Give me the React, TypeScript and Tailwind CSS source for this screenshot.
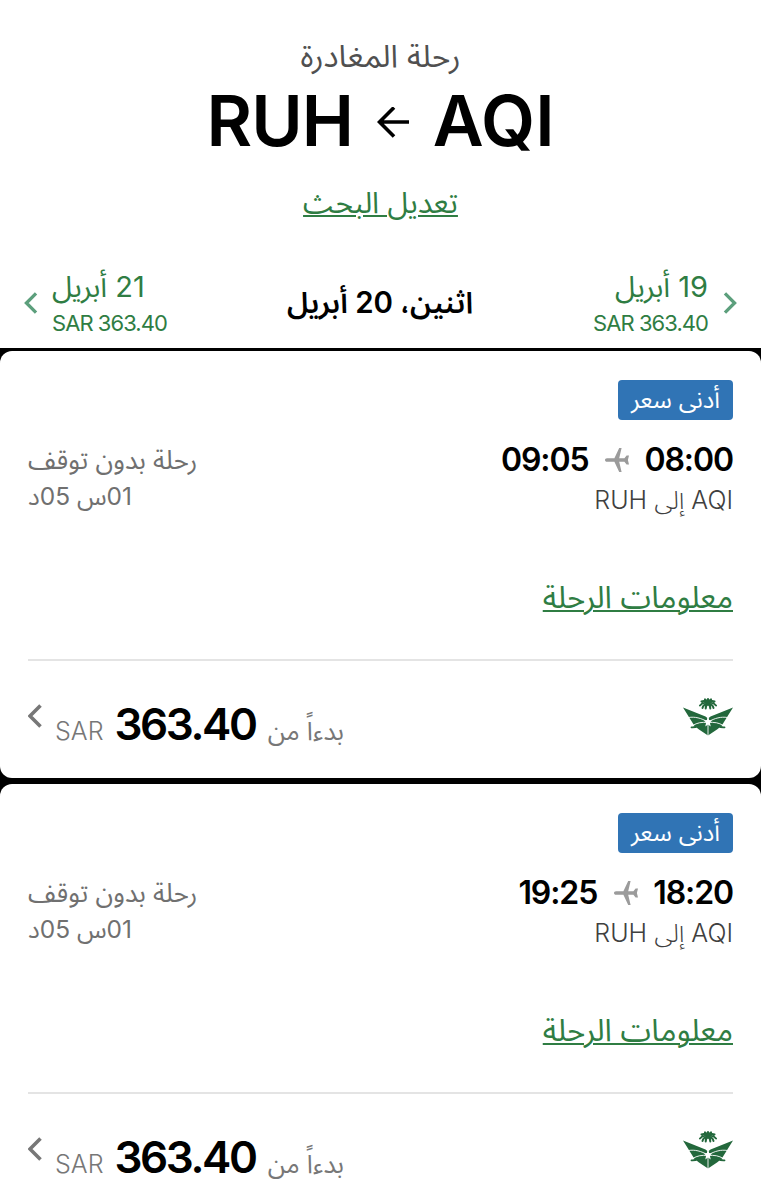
const flights = [
  { departs: "08:00", arrives: "09:05" },
  { departs: "18:20", arrives: "19:25" },
]

function Arrow() {
  return (
    <svg className="mt-1" width="32" height="32" viewBox="0 0 32 32" fill="none" stroke="#000" strokeWidth="3.6">
      <path d="M32 15H3M17 0.500 2.500 15 17 29.500" />
    </svg>
  )
}

function Plane() {
  return (
    <svg width="24" height="24" viewBox="0 0 24 24" fill="#9b9b9b">
      <path d="M0 12c0-1 .8-1.800 2-1.800h7.400L14.200 0h2.400l-2.400 10.200h5.200L21.600 7.400H24L22.900 12l1.100 4.600h-2.400l-2.200-2.800h-5.200L16.600 24h-2.400L9.400 13.800H2c-1.200 0-2-.800-2-1.800z" />
    </svg>
  )
}

function Chevron({ className, flip = false }: { className: string; flip?: boolean }) {
  return (
    <svg className={className} viewBox="0 0 14 24" fill="none" stroke="currentColor" strokeWidth="3.6">
      <path d={flip ? "M1.500 1.500 12 12 1.500 22.500" : "M12.500 1.500 2 12l10.500 10.500"} />
    </svg>
  )
}

function AirlineLogo() {
  return (
    <svg className="mt-[37px]" width="50" height="38" viewBox="0 0 50 38">
      <path fill="#23683c" d="M0 9.500 22.500 18.500 25 20.500 27.500 18.500 50 9.500 38.500 28 34 31.500 25 37.500 16 31.500 11.500 28z" />
      {/* feather gaps and the centre star */}
      <path
        fill="none"
        stroke="#fff"
        strokeWidth="0.9"
        d="M5.500 19.500C12 18.500 18 20 25 24 32 20 38 18.500 44.500 19.500M9.500 27.600c5-3 9-3.600 15.500-3.100 6.500-.5 10.500.1 15.500 3.100M25 20v18"
      />
      <path fill="#fff" d="m25 18 1.100 4 3.100.4-2.300 2.200.8 4-2.700-2.200-2.700 2.200.8-4-2.300-2.200 3.100-.4z" />
      <path fill="none" stroke="#23683c" strokeWidth="1.800" strokeLinecap="round" d="M8.500 29.400c3 .3 5.500-.6 8-2.600M41.500 29.400c-3 .3-5.500-.6-8-2.600" />
      <g fill="none" stroke="#23683c" strokeWidth="2" strokeLinecap="round">
        <path d="M25 5.500C22 4 19 5 17 7.500M25 5.500C28 4 31 5 33 7.500M25 5c-2-2-4-2.500-6.500-1.500M25 5c2-2 4-2.500 6.500-1.500M25 5c-.5-2-1.500-3-3-3.700M25 5c.500-2 1.500-3 3-3.700M25 5V1" />
        <path d="M25 6c-3 0-5 1.500-5.500 4M25 6c3 0 5 1.500 5.500 4M25 6c-1.500 1-2.300 2.500-2.300 4.500M25 6c1.500 1 2.300 2.500 2.300 4.500" />
      </g>
    </svg>
  )
}

function DayLink({ day, className }: { day: string; className: string }) {
  return (
    <div className={`pt-[17px] text-[#2f7d43] ${className}`}>
      <p className="h-10 text-[29px] leading-10 tracking-[-0.2px]">{day}</p>
      <p dir="ltr" className="text-[22px] leading-[32px] tracking-[-0.95px]">SAR 363.40</p>
    </div>
  )
}

function FlightCard({ departs, arrives }: { departs: string; arrives: string }) {
  return (
    <div className="h-[427px] shrink-0 rounded-xl bg-white px-7 pt-[29px]">
      <span className="flex h-10 w-[115px] items-center justify-center rounded-[4px] bg-[#3074b5] text-[24px] leading-10 text-white">
        أدنى سعر
      </span>
      <div className="mt-5 flex h-[80px] justify-between">
        <div>
          <div className="flex h-10 items-center text-[32px] font-semibold tracking-[-1.100px] text-black">
            <span>{departs}</span>
            <span className="ms-[15px] me-[17px]">
              <Plane />
            </span>
            <span>{arrives}</span>
          </div>
          <p className="h-10 text-[25px] leading-10 font-light text-[#404040]">AQI إلى RUH</p>
        </div>
        <div className="text-[26px] text-[#707070]">
          <p className="h-[37px] leading-10">رحلة بدون توقف</p>
          <p className="text-left text-[24.5px] leading-[38px] tracking-[-0.6px]">01س 05د</p>
        </div>
      </div>
      <div className="mt-[57px] h-[82px] text-[31px] leading-10">
        <a className="text-[#2f7d43] underline decoration-2 underline-offset-[2px]">معلومات الرحلة</a>
      </div>
      <div className="flex justify-between border-t-2 border-[#e4e4e4]">
        <AirlineLogo />
        <div className="flex items-baseline pt-[35px] text-[#777777]">
          <span className="text-[25.500px] leading-[56px]">بدءاً من</span>
          <span className="ms-3 me-[11px] text-[44px] leading-[56px] font-semibold tracking-[-2.400px] text-black">363.40</span>
          <span className="text-[25px] leading-[56px] font-light">SAR</span>
          <Chevron className="ms-[13px] mt-[8px] h-6 w-3.5 self-start" />
        </div>
      </div>
    </div>
  )
}

export default function App() {
  return (
    <div
      dir="rtl"
      className="h-[1200px] w-[761px] overflow-hidden bg-black font-['Inter','Noto_Sans_Arabic','DejaVu_Sans',sans-serif]"
    >
      <header className="flex h-[348px] flex-col bg-white pt-[36px]">
        <p className="h-10 text-center text-[31.500px] leading-10 text-[#505050]">رحلة المغادرة</p>
        <h1 className="mt-px flex h-[88px] items-center justify-center text-[70px] leading-[88px] font-semibold text-black">
          <span>AQI</span>
          <span className="mx-6">
            <Arrow />
          </span>
          <span className="tracking-[-1px]">RUH</span>
        </h1>
        <p className="mt-[17px] text-center text-[29.6px] leading-10">
          <a className="text-[#2f7d43] underline decoration-2 underline-offset-[2px]">تعديل البحث</a>
        </p>
        <div className="mt-[28px] flex justify-between px-6">
          <div className="flex gap-[15px]">
            <Chevron flip className="mt-[42px] h-[22px] w-[14px] text-[#5c9f7c]" />
            <DayLink day="19 أبريل" className="text-right" />
          </div>
          <p className="pt-[32px] text-[29.500px] leading-10 font-semibold tracking-[-0.3px] text-black">اثنين، 20 أبريل</p>
          <div className="flex gap-[14px]">
            <DayLink day="21 أبريل" className="text-left" />
            <Chevron className="mt-[42px] h-[22px] w-[14px] text-[#5c9f7c]" />
          </div>
        </div>
      </header>
      <main className="flex flex-col gap-1.5 pt-[3px]">
        {flights.map((f) => (
          <FlightCard key={f.departs} {...f} />
        ))}
      </main>
    </div>
  )
}
